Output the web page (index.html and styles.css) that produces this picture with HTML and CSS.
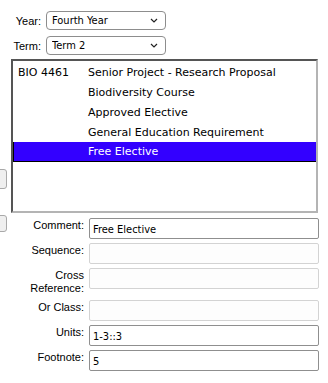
FILE: index.html
```html
<!DOCTYPE html>
<html lang="en">
<head>
    <meta charset="UTF-8">
    <meta name="viewport" content="width=device-width, initial-scale=1.0">
    <title>Plan Editor</title>
    <link rel="stylesheet" href="styles.css">
</head>
<body>
    <div class="terms">
        <label class="term-row" for="year"><span class="term-label">Year:</span>
            <select id="year" name="year">
                <option>First Year</option>
                <option>Second Year</option>
                <option>Third Year</option>
                <option selected>Fourth Year</option>
            </select>
        </label>
        <label class="term-row" for="term"><span class="term-label">Term:</span>
            <select id="term" name="term">
                <option>Term 1</option>
                <option selected>Term 2</option>
                <option>Term 3</option>
            </select>
        </label>
    </div>

    <div class="editor">
        <div class="nav">
            <button class="nav-btn" id="moveUp" title="Move up">
                <svg width="6" height="6" viewBox="0 0 6 6"><path d="M0 3h3" stroke="#777" stroke-width="1"/></svg>
            </button>
            <button class="nav-btn small" id="moveDown" title="Move down">
                <svg width="6" height="6" viewBox="0 0 6 6"><path d="M0 2h2M0 4h2" stroke="#999" stroke-width="1"/></svg>
            </button>
        </div>

        <div class="content">
            <ul class="courses" id="courses">
                <li class="course"><span class="code">BIO 4461</span><span class="title">Senior Project - Research Proposal</span></li>
                <li class="course"><span class="code"></span><span class="title">Biodiversity Course</span></li>
                <li class="course"><span class="code"></span><span class="title">Approved Elective</span></li>
                <li class="course"><span class="code"></span><span class="title">General Education Requirement</span></li>
                <li class="course selected"><span class="code"></span><span class="title">Free Elective</span></li>
            </ul>

            <form class="details">
                <label class="field-label" for="comment">Comment:</label>
                <input class="field" type="text" id="comment" value="Free Elective">

                <label class="field-label" for="sequence">Sequence:</label>
                <input class="field" type="text" id="sequence" disabled>

                <label class="field-label tall" for="crossref">Cross Reference:</label>
                <input class="field" type="text" id="crossref" disabled>

                <label class="field-label" for="orclass">Or Class:</label>
                <input class="field" type="text" id="orclass" disabled>

                <label class="field-label" for="units">Units:</label>
                <input class="field" type="text" id="units" value="1-3::3">

                <label class="field-label" for="footnote">Footnote:</label>
                <input class="field" type="text" id="footnote" value="5">
            </form>
        </div>
    </div>
</body>
</html>
```

FILE: styles.css
```css
body {
    margin: 0;
    width: 328px;
    height: 383px;
    overflow: hidden;
    background: #fff;
    font-family: "Liberation Sans", Arial, sans-serif;
    font-size: 11px;
    color: #000;
}

.terms {
    padding-top: 11px;
    display: flex;
    flex-direction: column;
    gap: 6px;
}
.term-row {
    display: flex;
    align-items: center;
}
.term-label {
    width: 41px;
    text-align: right;
    margin-right: 5px;
}
select {
    appearance: none;
    -webkit-appearance: none;
    width: 120px;
    height: 19px;
    box-sizing: border-box;
    margin: 0;
    padding: 0 0 0 5px;
    border: 1px solid #8d8d8d;
    border-radius: 4px;
    background: #fff url("data:image/svg+xml,%3Csvg xmlns='http://www.w3.org/2000/svg' width='8' height='5' viewBox='0 0 8 5'%3E%3Cpath d='M1 1l3 3 3-3' fill='none' stroke='%23222' stroke-width='1.2'/%3E%3C/svg%3E") no-repeat right 7px center;
    font-family: "DejaVu Sans Condensed", "DejaVu Sans", sans-serif;
    font-stretch: condensed;
    font-size: 11px;
    color: #000;
}

.editor {
    display: flex;
    margin-top: 4px;
}
.nav {
    width: 7px;
    margin-right: 4px;
    padding-top: 110px;
    display: flex;
    flex-direction: column;
    align-items: flex-end;
}
.nav-btn {
    width: 24px;
    height: 20px;
    flex: none;
    margin: 0;
    padding: 0 0 0 17px;
    box-sizing: border-box;
    border: 1px solid #a9a9a9;
    border-radius: 3px;
    background: #efefef;
    display: flex;
    align-items: center;
    justify-content: flex-start;
}
.nav-btn svg {
    margin-left: -17px;
}
.nav-btn.small {
    height: 17px;
    margin-top: 26px;
}

.content {
    width: 308px;
}
.courses {
    margin: 0;
    padding: 0;
    width: 307px;
    height: 154px;
    box-sizing: border-box;
    border-style: solid;
    border-width: 2px;
    border-color: #555 #b4b4b4 #b4b4b4 #555;
    list-style: none;
    font-family: "DejaVu Sans", Verdana, sans-serif;
    font-size: 11px;
}
.course {
    display: flex;
    height: 20px;
    align-items: center;
    box-sizing: border-box;
}
.course:first-child {
    margin-top: 1px;
}
.code {
    width: 75px;
    padding-left: 5px;
    box-sizing: border-box;
    flex: none;
}
.course.selected {
    background: #3300ff;
    color: #fff;
    border-left: 1px solid #000;
    border-bottom: 1px solid #000;
}
.course.selected .code {
    width: 74px;
}

.details {
    margin-top: 5px;
    display: grid;
    grid-template-columns: 73px 230px;
    column-gap: 5px;
    row-gap: 4px;
}
.field-label {
    text-align: right;
    line-height: 13px;
    padding-top: 1px;
}
.field-label.tall {
    padding-bottom: 1px;
}
.field {
    width: 230px;
    height: 21px;
    box-sizing: border-box;
    margin: 0;
    padding: 2px 3px 0;
    border: 1px solid #8f8f8f;
    border-radius: 2px;
    background: #fff;
    font-family: "DejaVu Sans Condensed", "DejaVu Sans", sans-serif;
    font-stretch: condensed;
    font-size: 11px;
    color: #000;
}
.field:disabled {
    border-color: #d3d3d3;
    background: #fdfdfd;
}
```
